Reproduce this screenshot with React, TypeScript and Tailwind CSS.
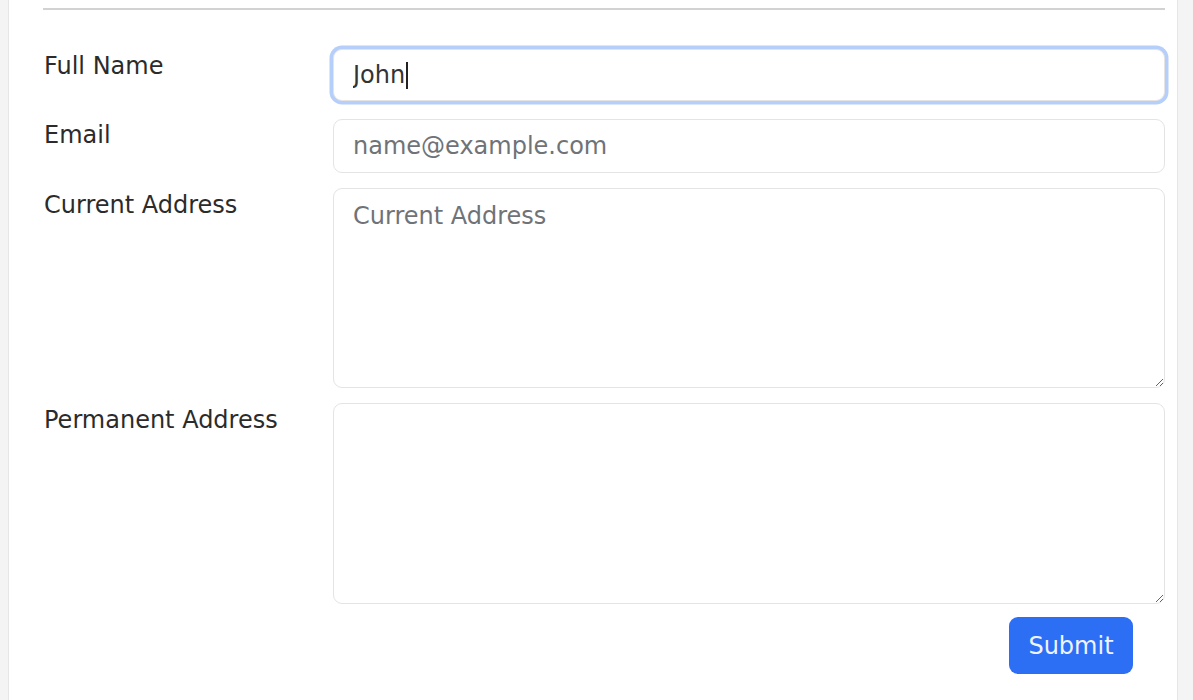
import { useState } from 'react';

const labelCls = 'text-[24px] leading-[36px] text-[#2b2b2b] -mt-[1px]';
const fieldCls =
  'w-full rounded-[9px] border-[1.5px] border-[#e4e4e4] bg-white px-[19px] text-[24px] text-[#333] placeholder:text-[#6f7378] outline-none';

export default function App() {
  const [name, setName] = useState('John');
  const [email, setEmail] = useState('');
  const [current, setCurrent] = useState('');
  const [permanent, setPermanent] = useState('');

  return (
    <div
      className="min-h-[700px] bg-[#f4f4f4] overflow-hidden"
      style={{ fontFamily: '"DejaVu Sans", sans-serif' }}
    >
      <div className="ml-[8px] w-[1170px] min-h-[700px] bg-white border-l-[1.5px] border-r-[1.5px] border-[#e6e6e6] pl-[35px] pr-[12px] pt-[8px]">
        <hr className="border-0 h-[2px] bg-[#d2d2d2] -ml-[1px]" />

        <form
          className="grid grid-cols-[289px_1fr] mt-[39px]"
          onSubmit={(e) => e.preventDefault()}
        >
          {/* Full Name */}
          <label className={labelCls}>Full Name</label>
          <div className="relative">
            <input
              value={name}
              onChange={(e) => setName(e.target.value)}
              className={`${fieldCls} h-[52px] border-[#86b1f5] shadow-[0_0_0_3.5px_#b5cefa]`}
            />
            {/* caret */}
            <span className="absolute left-[73px] top-[13px] h-[27px] w-[1.5px] bg-[#222]" />
          </div>

          {/* Email */}
          <label className={`${labelCls} mt-[16px]`}>Email</label>
          <input
            value={email}
            onChange={(e) => setEmail(e.target.value)}
            placeholder="name@example.com"
            className={`${fieldCls} h-[54px] mt-[18px]`}
          />

          {/* Current Address */}
          <label className={`${labelCls} mt-[14px]`}>Current Address</label>
          <textarea
            value={current}
            onChange={(e) => setCurrent(e.target.value)}
            placeholder="Current Address"
            className={`${fieldCls} h-[200px] mt-[15px] pt-[9px] leading-[36px]`}
          />

          {/* Permanent Address */}
          <label className={`${labelCls} mt-[14px]`}>Permanent Address</label>
          <textarea
            value={permanent}
            onChange={(e) => setPermanent(e.target.value)}
            className={`${fieldCls} h-[201px] mt-[15px] pt-[9px] leading-[36px]`}
          />

          <div className="col-span-2 flex justify-end mt-[13px] pr-[32px]">
            <button
              type="submit"
              className="h-[57px] w-[124px] rounded-[9px] bg-[#2c6ef4] text-[24px] text-[#eef3ff]"
            >
              Submit
            </button>
          </div>
        </form>
      </div>
    </div>
  );
}
